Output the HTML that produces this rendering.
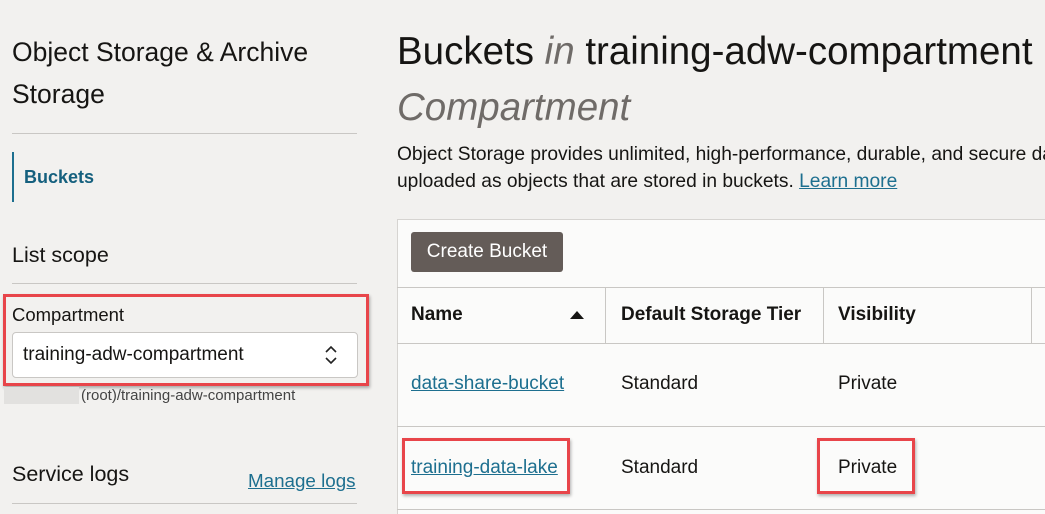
<!DOCTYPE html>
<html><head><style>
body{margin:0;width:1045px;height:513px;overflow:hidden;background:#f2f1ef;font-family:"Liberation Sans",Arial,sans-serif;color:#161513;position:relative}
.a{position:absolute;white-space:nowrap}
.hr{position:absolute;height:1px;background:#c9c7c4}
a{color:#1d6f8f;text-decoration:underline}
.red{position:absolute;border:3px solid #e8454a;box-shadow:1px 2px 3px rgba(0,0,0,.3)}
</style></head><body>
<div class="a" style="left:12px;top:31px;font-size:26.5px;line-height:42px">Object Storage &amp; Archive<br>Storage</div>
<div class="hr" style="left:12px;top:133px;width:345px"></div>
<div class="a" style="left:12px;top:152px;width:2px;height:50px;background:#1d6f8f"></div>
<div class="a" style="left:24px;top:167px;font-size:18px;font-weight:bold;color:#15607e">Buckets</div>
<div class="a" style="left:12px;top:243px;font-size:21.5px">List scope</div>
<div class="hr" style="left:12px;top:283px;width:345px"></div>
<div class="a" style="left:12px;top:304px;font-size:18.5px">Compartment</div>
<div class="a" style="left:12px;top:332px;width:344px;height:44px;background:#fff;border:1px solid #c9c7c4;border-radius:4px"></div>
<div class="a" style="left:23px;top:344px;font-size:19px">training-adw-compartment</div>
<svg class="a" style="left:324px;top:345px" width="14" height="20"><path d="M2 7L7 2L12 7M2 13L7 18L12 13" fill="none" stroke="#222" stroke-width="1.6"/></svg>
<div class="red" style="left:3px;top:294px;width:360px;height:86px"></div>
<div class="a" style="left:4px;top:387px;width:75px;height:17px;background:#e2e1df"></div>
<div class="a" style="left:81px;top:387px;font-size:15px;color:#444">(root)/training-adw-compartment</div>
<div class="a" style="left:12px;top:462px;font-size:21.5px">Service logs</div>
<div class="a" style="left:248px;top:470px;font-size:18.8px"><a>Manage logs</a></div>
<div class="hr" style="left:12px;top:503px;width:345px"></div>

<div class="a" style="left:397px;top:30px;font-size:38.5px">Buckets <i style="color:#6f6b68">in</i> training-adw-compartment</div>
<div class="a" style="left:397px;top:86px;font-size:38.5px;font-style:italic;color:#6f6b68">Compartment</div>
<div class="a" style="left:397px;top:141px;font-size:19.2px;line-height:27px">Object Storage provides unlimited, high-performance, durable, and secure data storage. Data is<br>uploaded as objects that are stored in buckets. <a>Learn more</a></div>

<div class="a" style="left:397px;top:219px;width:648px;height:294px;background:#fbfbfa;border-left:1px solid #d6d4d1;border-top:1px solid #d6d4d1"></div>
<div class="a" style="left:411px;top:232px;width:152px;height:40px;background:#645c58;border-radius:3px;color:#fff;font-size:19px;line-height:40px;text-align:center">Create Bucket</div>
<div class="hr" style="left:397px;top:287px;width:648px"></div>
<div class="hr" style="left:397px;top:343px;width:648px"></div>
<div class="hr" style="left:397px;top:426px;width:648px"></div>
<div class="hr" style="left:397px;top:509px;width:648px"></div>
<div class="a" style="left:605px;top:288px;width:1px;height:55px;background:#c9c7c4"></div>
<div class="a" style="left:823px;top:288px;width:1px;height:55px;background:#c9c7c4"></div>
<div class="a" style="left:1031px;top:288px;width:1px;height:55px;background:#c9c7c4"></div>
<div class="a" style="left:411px;top:304px;font-size:19px;font-weight:bold">Name</div>
<svg class="a" style="left:570px;top:310px" width="14" height="9"><path d="M0 9L7 1L14 9Z" fill="#161513"/></svg>
<div class="a" style="left:621px;top:304px;font-size:19px;font-weight:bold">Default Storage Tier</div>
<div class="a" style="left:838px;top:304px;font-size:19px;font-weight:bold">Visibility</div>
<div class="a" style="left:411px;top:373px;font-size:19px"><a>data-share-bucket</a></div>
<div class="a" style="left:621px;top:373px;font-size:19px">Standard</div>
<div class="a" style="left:838px;top:373px;font-size:19px">Private</div>
<div class="a" style="left:411px;top:457px;font-size:19px"><a>training-data-lake</a></div>
<div class="a" style="left:621px;top:457px;font-size:19px">Standard</div>
<div class="a" style="left:838px;top:457px;font-size:19px">Private</div>
<div class="red" style="left:402px;top:438px;width:162px;height:50px"></div>
<div class="red" style="left:817px;top:438px;width:92px;height:50px"></div>
</body></html>
